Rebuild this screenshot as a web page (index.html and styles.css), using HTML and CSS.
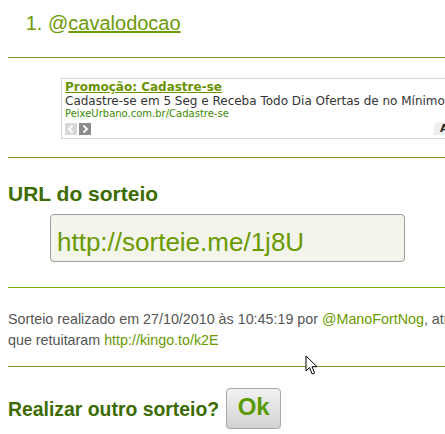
FILE: index.html
```html
<!DOCTYPE html>
<html lang="pt">
<head>
<meta charset="utf-8">
<title>Sorteie.me</title>
<link rel="stylesheet" href="styles.css">
</head>
<body>
<div class="page">
  <ol class="winners">
    <li>@<a href="#" class="winner-link">cavalodocao</a></li>
  </ol>
  <hr class="rule rule-dark">
  <div class="ad">
    <a href="#" class="ad-title">Promoção: Cadastre-se</a>
    <div class="ad-desc">Cadastre-se em 5 Seg e Receba Todo Dia Ofertas de no Mínimo 50% de Desconto</div>
    <div class="ad-url">PeixeUrbano.com.br/Cadastre-se</div>
    <div class="ad-nav">
      <span class="ad-btn ad-btn-off"><svg width="12" height="12" viewBox="0 0 12 12"><path d="M7.5 2.5 L4 6 L7.5 9.5" fill="none" stroke="#fff" stroke-width="1.8"/></svg></span>
      <span class="ad-btn ad-btn-on"><svg width="12" height="12" viewBox="0 0 12 12"><path d="M4.5 2.5 L8 6 L4.5 9.5" fill="none" stroke="#fff" stroke-width="1.8"/></svg></span>
      <span class="ad-tag">AdChoices</span>
    </div>
  </div>
  <hr class="rule rule-dark">
  <h3 class="heading">URL do sorteio</h3>
  <div class="url-box">http://sorteie.me/1j8U</div>
  <hr class="rule rule-bright">
  <p class="info">Sorteio realizado em 27/10/2010 às 10:45:19 por <a href="#" class="info-link">@ManoFortNog</a>, atrav&eacute;s dos seguidores<br>que retuitaram <a href="#" class="info-link">http://kingo.to/k2E</a></p>
  <hr class="rule rule-dark">
  <div class="again">
    <span class="heading again-label">Realizar outro sorteio?</span>
    <button class="ok-btn">Ok</button>
  </div>
  <svg class="cursor" width="14" height="22" viewBox="0 0 14 22"><path d="M1 1 L1 16 L4.5 12.5 L7.2 19 L9.6 18 L7 11.7 L12 11.7 Z" fill="#fff" stroke="#000" stroke-width="1" stroke-linejoin="round"/></svg>
</div>
</body>
</html>
```
FILE: styles.css
```css
html, body {
  margin: 0;
  padding: 0;
  background: #fff;
  overflow: hidden;
}
body {
  padding: 0 0 0 8px;
  font-family: "Liberation Sans", Arial, sans-serif;
}
.page {
  width: 700px;
  position: relative;
}
.winners {
  margin: 0;
  padding: 12px 0 0 40px;
  font-size: 20px;
  line-height: 23px;
  color: #6e9a0a;
}
.winner-link {
  color: #6e9a0a;
  text-decoration: underline;
}
.rule {
  border: 0;
  height: 1px;
  margin: 0;
}
.rule-dark { background: #74962a; }
.rule-bright { background: #7aa60a; }
.winners + .rule { margin-top: 22px; }
.ad {
  margin: 20px 0 0 53px;
  border: 1px solid #d8d8d8;
  border-right: 0;
  padding: 1px 0 3px 3px;
  font-family: "DejaVu Sans", Verdana, sans-serif;
  white-space: nowrap;
  overflow: hidden;
  width: 480px;
}
.ad-title {
  display: block;
  font-size: 12px;
  font-weight: bold;
  line-height: 14px;
  color: #6b9200;
  text-decoration: underline;
}
.ad-desc {
  font-size: 12px;
  line-height: 14px;
  color: #333;
}
.ad-url {
  font-size: 10px;
  line-height: 12px;
  color: #3d8a00;
}
.ad-nav {
  display: flex;
  align-items: center;
  gap: 2px;
  margin-top: 2px;
  height: 13px;
}
.ad-btn {
  width: 12px;
  height: 12px;
  display: flex;
}
.ad-btn-off { background: #d8d8d8; }
.ad-btn-on { background: #8a8a8a; }
.ad-tag {
  margin-left: 341px;
  font-size: 11px;
  font-weight: bold;
  background: #eee;
  border-radius: 5px 0 0 0;
  padding: 0 0 0 6px;
  height: 13px;
  line-height: 13px;
  color: #222;
}
.ad + .rule { margin-top: 18px; }
.heading {
  font-size: 21px;
  font-weight: bold;
  color: #3c6c00;
  line-height: 24px;
}
h3.heading {
  margin: 24px 0 0 0;
}
.url-box {
  margin: 8px 0 0 42px;
  width: 341px;
  height: 40px;
  padding: 0 6px 6px 6px;
  border: 1px solid #9e9e9e;
  border-radius: 4px;
  background: #f3f4ec;
  font-size: 26px;
  line-height: 26px;
  color: #6a9a00;
  display: flex;
  align-items: flex-end;
}
.url-box + .rule { margin-top: 25px; }
.info {
  margin: 21px 0 0 0;
  font-size: 14.3px;
  line-height: 21px;
  color: #555;
  white-space: nowrap;
}
.info-link {
  color: #6a9a00;
  text-decoration: none;
}
.info + .rule { margin-top: 15px; }
.again {
  display: flex;
  align-items: center;
  gap: 7px;
  margin-top: 21px;
}
.again-label {
  font-size: 19.4px;
}
.ok-btn {
  width: 55px;
  height: 41px;
  border: 1px solid #a8a8a8;
  border-radius: 4px;
  background: linear-gradient(#f2f2f2, #d2d2d2);
  box-shadow: 0 1px 1px rgba(0, 0, 0, 0.15);
  font-family: "Liberation Sans", Arial, sans-serif;
  font-size: 24px;
  font-weight: bold;
  color: #5a9a00;
  padding: 0 0 3px 0;
  line-height: 28px;
}
.cursor {
  position: absolute;
  left: 297px;
  top: 355px;
}
```
